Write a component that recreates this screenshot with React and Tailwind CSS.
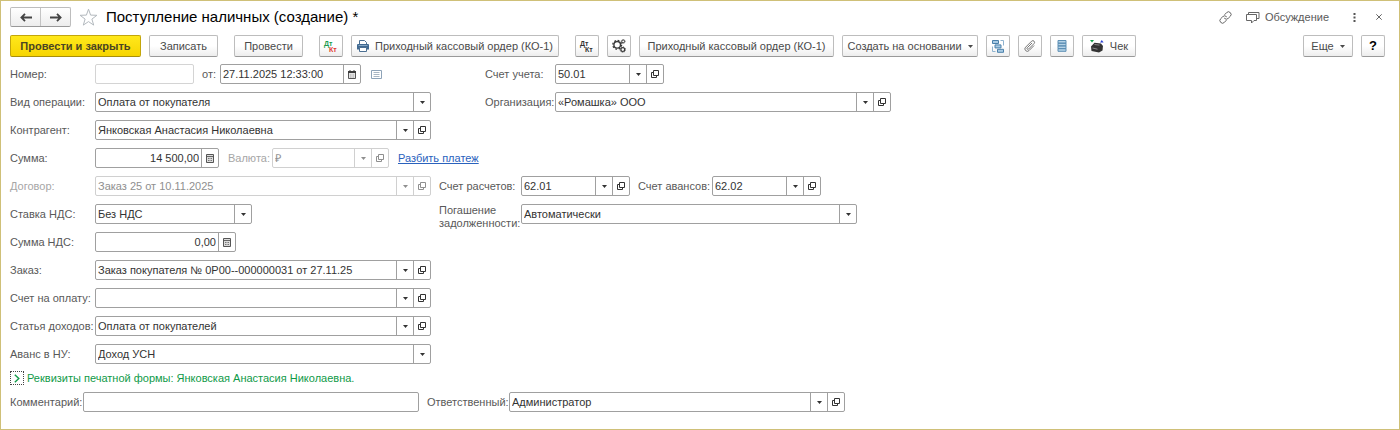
import { useId } from "react";
import clsx from "clsx";

function CaretIcon() {
  return (
    <svg width="5" height="3" viewBox="0 0 5 3" fill="currentColor" aria-hidden="true">
      <path d="M0 0h5L2.5 3z" />
    </svg>
  );
}

function OpenIcon() {
  return (
    <svg width="8" height="8" viewBox="0 0 8 8" fill="none" stroke="currentColor" aria-hidden="true">
      <path d="M2.5.5h5v5h-5zM2.5 2.5h-2v5h5v-2" />
    </svg>
  );
}

function CalcIcon() {
  return (
    <svg width="8" height="9" viewBox="0 0 8 9" aria-hidden="true">
      <path d="M.5.5h7v8h-7z" fill="#dcdcdc" stroke="#555" />
      <path d="M1 2.5h6" stroke="#666" />
      <path d="M2 4.5h4M2 6.5h4" stroke="#777" strokeDasharray="1 .5" />
    </svg>
  );
}

function CalendarIcon() {
  return (
    <svg width="8" height="9" viewBox="0 0 8 9" aria-hidden="true">
      <path d="M.5 1.5h7v7h-7z" fill="#e4e4e4" stroke="#555" />
      <path d="M0 2h8" stroke="#3c3c3c" strokeWidth="2" />
      <path d="M2 0v1M6 0v1" stroke="#3c3c3c" />
      <path d="M2 5h4M2 7h4" stroke="#aaa" strokeDasharray="1 .5" />
    </svg>
  );
}

function ListIcon() {
  return (
    <svg width="11" height="9" viewBox="0 0 11 9" fill="none" aria-hidden="true">
      <path d="M.5.5h10v8H.5z" stroke="#8ea3b8" />
      <path d="M2.5 2.5h6M2.5 4.5h6M2.5 6.5h6" stroke="#a9b6c3" />
    </svg>
  );
}

function ArrowIcon({ flip }) {
  return (
    <svg width="12" height="9" viewBox="0 0 12 9" fill="none" stroke="#444" strokeWidth="1.8" className={clsx(flip && "rotate-180")} aria-hidden="true">
      <path d="M5 .8 1.4 4.5 5 8.2M1.5 4.5H12" />
    </svg>
  );
}

function StarIcon() {
  return (
    <svg width="19" height="18" viewBox="0 0 19 18" fill="none" stroke="#b3b9be" aria-hidden="true">
      <path d="m9.5 1.2 2.1 5.9 6.3.2-5 3.8 1.8 6-5.2-3.5-5.2 3.5 1.8-6-5-3.8 6.3-.2z" />
    </svg>
  );
}

function LinkIcon() {
  return (
    <svg width="13" height="13" viewBox="0 0 13 13" fill="none" stroke="#666" strokeLinecap="round" aria-hidden="true">
      <path d="M5.8 3.5 7.6 1.6a2.6 2.6 0 0 1 3.7 3.7L9.2 7.4a2.6 2.6 0 0 1-3.7 0" />
      <path d="M7.2 9.4l-1.8 2a2.6 2.6 0 0 1-3.7-3.7l2.1-2.1a2.6 2.6 0 0 1 3.7 0" />
    </svg>
  );
}

function ChatIcon() {
  return (
    <svg width="14" height="13" viewBox="0 0 14 13" fill="none" stroke="#666" aria-hidden="true">
      <path d="M.5 3.5h10v6H8L5.500 12V9.500h-5z" />
      <path d="M2.500 3.500v-2h10.500v6h-2.500" />
    </svg>
  );
}

function DtKtIcon({ dt, kt }) {
  return (
    <svg width="16" height="16" viewBox="0 0 16 16" fontFamily="Liberation Sans, sans-serif" fontWeight="700" fontSize="7" aria-hidden="true">
      <text x="1" y="8" fill={dt}>Дт</text>
      <text x="6" y="14" fill={kt}>Кт</text>
    </svg>
  );
}

function PrinterIcon() {
  return (
    <svg width="12" height="12" viewBox="0 0 12 12" aria-hidden="true">
      <path d="M2.5 4.500v-4h5l2 2v2" fill="#fff" stroke="#4b6f92" />
      <path d="M1 4h10a1 1 0 0 1 1 1v4.500H0V5a1 1 0 0 1 1-1z" fill="#416a92" />
      <path d="M2.500 7.500h7v4h-7z" fill="#fff" stroke="#4b6f92" />
      <path d="M1.500 5.500h9" stroke="#88a8c5" />
    </svg>
  );
}

function GearsIcon() {
  return (
    <svg width="14" height="14" viewBox="0 0 14 14" fill="none" stroke="#3a3a3a" aria-hidden="true">
      <circle cx="5.200" cy="5.800" r="4.400" strokeWidth="1.300" strokeDasharray="1.700 1.750" />
      <circle cx="5.200" cy="5.800" r="3.300" strokeWidth="1.400" />
      <circle cx="11.200" cy="2.400" r="1.400" />
      <circle cx="11.200" cy="2.400" r="2" strokeWidth=".7" strokeDasharray=".8 .8" />
      <circle cx="10.800" cy="10.600" r="1.900" strokeWidth="1.200" />
      <circle cx="10.800" cy="10.600" r="2.700" strokeWidth=".8" strokeDasharray="1.100 1" />
    </svg>
  );
}

function StructureIcon() {
  return (
    <svg width="12" height="13" viewBox="0 0 12 13" aria-hidden="true">
      <path d="M.5 6.500v5h3M8.500.5h3v5" fill="none" stroke="#8fb3cf" />
      <path d="M.5.500h6v3h-6zM3 4.900h6v3H3zM5.500 9.300h6v3h-6z" fill="#a9cbe4" stroke="#4a80ab" />
    </svg>
  );
}

function ClipIcon() {
  return (
    <svg width="12" height="12" viewBox="0 0 12 12" fill="none" stroke="#777" strokeLinecap="round" aria-hidden="true">
      <path d="m7.800 3.200-4.600 4.600a.9.900 0 0 0 1.300 1.300l5.600-5.600a1.700 1.700 0 0 0-2.400-2.400L1.600 7.200a2.400 2.400 0 0 0 3.400 3.400l4.800-4.800" />
    </svg>
  );
}

function StackIcon() {
  return (
    <svg width="10" height="12" viewBox="0 0 10 12" fill="#b5d2e6" stroke="#5c8fb4" aria-hidden="true">
      <path d="M1 .5h8v2.700H1zM1 3.200h8v2.700H1zM1 5.900h8v2.700H1zM1 8.600h8v2.700H1z" />
    </svg>
  );
}

function CashIcon() {
  return (
    <svg width="14" height="13" viewBox="0 0 14 13" aria-hidden="true">
      <path d="M0 0h4L2 2.600z" fill="#13a24a" />
      <path d="M10 2.600h3.600L11.800 0z" fill="#2a3fd0" />
      <path d="m1 6.500 3.500-3.800 6.500.8 2 2.500-.5 4.500-3.500 2L1.500 11z" fill="#333" />
      <path d="m4.500 4.500 5 .6M2.500 8l5 1.200" stroke="#8a8a8a" />
    </svg>
  );
}

function Button({ primary, icon, className, children, ...rest }) {
  return (
    <button
      type="button"
      className={clsx(
        "flex h-[22px] shrink-0 items-center justify-center gap-[6px] whitespace-nowrap rounded-[2px] border leading-4 [&>svg]:shrink-0",
        primary
          ? "border-[#c3a60b] border-b-[#a88f0a] bg-linear-to-b from-[#ffe81a] to-[#f7d500] font-bold text-[#4a4522]"
          : "border-[#bdbdbd] border-b-[#999] bg-linear-to-b from-white from-50% to-[#ededed] text-[#4a4a4a]",
        icon && "w-6",
        className
      )}
      {...rest}
    >
      {children}
    </button>
  );
}

const frame = "flex h-5 overflow-hidden rounded-[2px] border";
const cell = "flex w-[17px] shrink-0 items-center justify-center border-l border-inherit";

// Drop-down with an optional button that opens the chosen item
function SelectField({ id, value, open, disabled, className }) {
  return (
    <div className={clsx(frame, disabled ? "border-[#d0d0d0] text-[#8f8f8f]" : "border-[#a0a0a0] text-[#333]", className)}>
      <div className="relative min-w-0 flex-1 border-inherit">
        <select id={id} disabled={disabled} className="h-full w-full appearance-none truncate bg-transparent pr-5 pl-[2px] outline-none">
          <option>{value}</option>
        </select>
        <span className={clsx(cell, "pointer-events-none absolute inset-y-0 right-0")}>
          <CaretIcon />
        </span>
      </div>
      {open && (
        <button type="button" aria-label="Открыть" disabled={disabled} className={cell}>
          <OpenIcon />
        </button>
      )}
    </div>
  );
}

function InputField({ id, value = "", right, button, icon, pale, className }) {
  return (
    <div className={clsx(frame, "text-[#333]", pale ? "border-[#d4d4d4]" : "border-[#a0a0a0]", className)}>
      <input id={id} defaultValue={value} className={clsx("min-w-0 flex-1 px-[2px] outline-none", right && "text-right")} />
      {icon && (
        <button type="button" aria-label={button} className={cell}>
          {icon}
        </button>
      )}
    </div>
  );
}

function Labeled({ label, labelClass, kind: Kind = SelectField, ...rest }) {
  const id = useId();
  return (
    <div className="flex h-5 items-center">
      <label htmlFor={id} className={clsx("shrink-0", rest.disabled && "text-[#a6a6a6]", labelClass)}>
        {label}
      </label>
      <Kind id={id} {...rest} />
    </div>
  );
}

const side = "w-[85px]";

export default function App() {
  return (
    <div className="min-h-screen border border-[#cfc078] bg-white px-[9px] pt-[6px] pb-3 font-['Liberation_Sans',Arial,sans-serif] text-[11px] leading-[13px] text-[#595959]">
      <header className="flex h-5 items-center">
        <div className="flex h-5 w-[61px] divide-x divide-[#c4c4c4] rounded-[2px] border border-[#bdbdbd] border-b-[#999] bg-linear-to-b from-white to-[#ededed]">
          <button type="button" aria-label="Назад" className="flex flex-1 items-center justify-center">
            <ArrowIcon />
          </button>
          <button type="button" aria-label="Вперед" className="flex flex-1 items-center justify-center">
            <ArrowIcon flip />
          </button>
        </div>
        <button type="button" aria-label="В избранное" className="ml-2">
          <StarIcon />
        </button>
        <h1 className="ml-2 text-[15px] leading-5 text-black">Поступление наличных (создание) *</h1>
        <div className="ml-auto flex items-center">
          <button type="button" aria-label="Ссылка">
            <LinkIcon />
          </button>
          <button type="button" className="ml-[14px] flex items-center gap-[5px]">
            <ChatIcon />
            Обсуждение
          </button>
          <button type="button" aria-label="Меню" className="ml-6">
            <svg width="3" height="11" viewBox="0 0 3 11" fill="#555" aria-hidden="true">
              <path d="M.5 1h2v2h-2zM.5 4.500h2v2h-2zM.5 8h2v2h-2z" />
            </svg>
          </button>
          <button type="button" aria-label="Закрыть" className="mr-2 ml-5">
            <svg width="6" height="6" viewBox="0 0 6 6" stroke="#666" aria-hidden="true">
              <path d="m.3.3 5.400 5.400M5.700.3.3 5.700" />
            </svg>
          </button>
        </div>
      </header>

      <div className="mt-2 flex items-center gap-4 pr-[5px]">
        <div className="flex gap-2">
          <Button primary className="w-[131px]">Провести и закрыть</Button>
          <Button className="w-[69px]">Записать</Button>
        </div>
        <Button className="w-[69px]">Провести</Button>
        <div className="flex gap-2">
          <Button icon aria-label="Проводки">
            <DtKtIcon dt="#1c9c4f" kt="#e0392f" />
          </Button>
          <Button className="w-[208px]">
            <PrinterIcon />
            Приходный кассовый ордер (КО-1)
          </Button>
        </div>
        <div className="flex gap-2">
          <Button icon aria-label="Движения документа">
            <DtKtIcon dt="#333" kt="#333" />
          </Button>
          <Button icon aria-label="Настройки">
            <GearsIcon />
          </Button>
          <Button className="w-[195px]">Приходный кассовый ордер (КО-1)</Button>
          <Button className="w-[136px]">
            Создать на основании
            <CaretIcon />
          </Button>
          <Button icon aria-label="Структура подчиненности">
            <StructureIcon />
          </Button>
          <Button icon aria-label="Файлы">
            <ClipIcon />
          </Button>
          <Button icon aria-label="Реестр">
            <StackIcon />
          </Button>
          <Button className="w-[54px]">
            <CashIcon />
            Чек
          </Button>
        </div>
        <div className="ml-auto flex gap-2">
          <Button className="w-[50px]">
            Еще
            <CaretIcon />
          </Button>
          <Button icon aria-label="Справка">
            <b className="text-[13px] text-black">?</b>
          </Button>
        </div>
      </div>

      <form className="mt-[7px] flex flex-col gap-[7px]">
        <div className="flex flex-col gap-2">
          <div className="flex">
            <div className="flex w-[475px] items-center">
              <Labeled kind={InputField} label="Номер:" labelClass={side} pale className="w-[99px]" />
              <div className="ml-2">
                <Labeled kind={InputField} label="от:" labelClass="w-[18px]" value="27.11.2025 12:33:00" button="Календарь" icon={<CalendarIcon />} className="w-[141px]" />
              </div>
              <button type="button" aria-label="История" className="ml-[10px]">
                <ListIcon />
              </button>
            </div>
            <Labeled label="Счет учета:" labelClass="w-[70px]" value="50.01" open className="w-[109px]" />
          </div>

          <div className="flex">
            <div className="w-[475px]">
              <Labeled label="Вид операции:" labelClass={side} value="Оплата от покупателя" className="w-[336px]" />
            </div>
            <Labeled label="Организация:" labelClass="w-[70px]" value="«Ромашка» ООО" open className="w-[336px]" />
          </div>

          <Labeled label="Контрагент:" labelClass={side} value="Янковская Анастасия Николаевна" open className="w-[336px]" />

          <div className="flex items-center gap-[9px]">
            <Labeled kind={InputField} label="Сумма:" labelClass={side} value="14 500,00" right button="Калькулятор" icon={<CalcIcon />} className="w-[124px]" />
            <Labeled label="Валюта:" labelClass="w-[44px]" value="₽" open disabled className="w-[117px]" />
            <a href="#split" className="text-[#2a62bd] underline">Разбить платеж</a>
          </div>

          <div className="flex items-center gap-2">
            <Labeled label="Договор:" labelClass={side} value="Заказ 25 от 10.11.2025" open disabled className="w-[336px]" />
            <Labeled label="Счет расчетов:" labelClass="w-[82px]" value="62.01" open className="w-[109px]" />
            <Labeled label="Счет авансов:" labelClass="w-[74px]" value="62.02" open className="w-[109px]" />
          </div>

          <div className="flex">
            <div className="w-[429px]">
              <Labeled label="Ставка НДС:" labelClass={side} value="Без НДС" className="w-[157px]" />
            </div>
            <Labeled label="Погашение задолженности:" labelClass="h-5 w-[82px]" value="Автоматически" className="w-[336px]" />
          </div>

          <Labeled kind={InputField} label="Сумма НДС:" labelClass={side} value="0,00" right button="Калькулятор" icon={<CalcIcon />} className="w-[141px]" />
          <Labeled label="Заказ:" labelClass={side} value="Заказ покупателя № 0Р00--000000031 от 27.11.25" open className="w-[336px]" />
          <Labeled label="Счет на оплату:" labelClass={side} value="" open className="w-[336px]" />
          <Labeled label="Статья доходов:" labelClass={side} value="Оплата от покупателей" open className="w-[336px]" />
          <Labeled label="Аванс в НУ:" labelClass={side} value="Доход УСН" className="w-[336px]" />
        </div>

        <button type="button" className="flex items-center gap-[3px] self-start text-[#0f9a48]">
          <span className="flex size-[14px] items-center justify-center border border-dotted border-[#444]">
            <svg width="6" height="9" viewBox="0 0 6 9" fill="none" stroke="currentColor" strokeWidth="1.400" aria-hidden="true">
              <path d="m.8.8 4 3.700-4 3.700" />
            </svg>
          </span>
          Реквизиты печатной формы: Янковская Анастасия Николаевна.
        </button>

        <div className="flex gap-2">
          <Labeled kind={InputField} label="Комментарий:" labelClass="w-[73px]" className="w-[336px]" />
          <Labeled label="Ответственный:" labelClass="w-[82px]" value="Администратор" open className="w-[336px]" />
        </div>
      </form>
    </div>
  );
}
